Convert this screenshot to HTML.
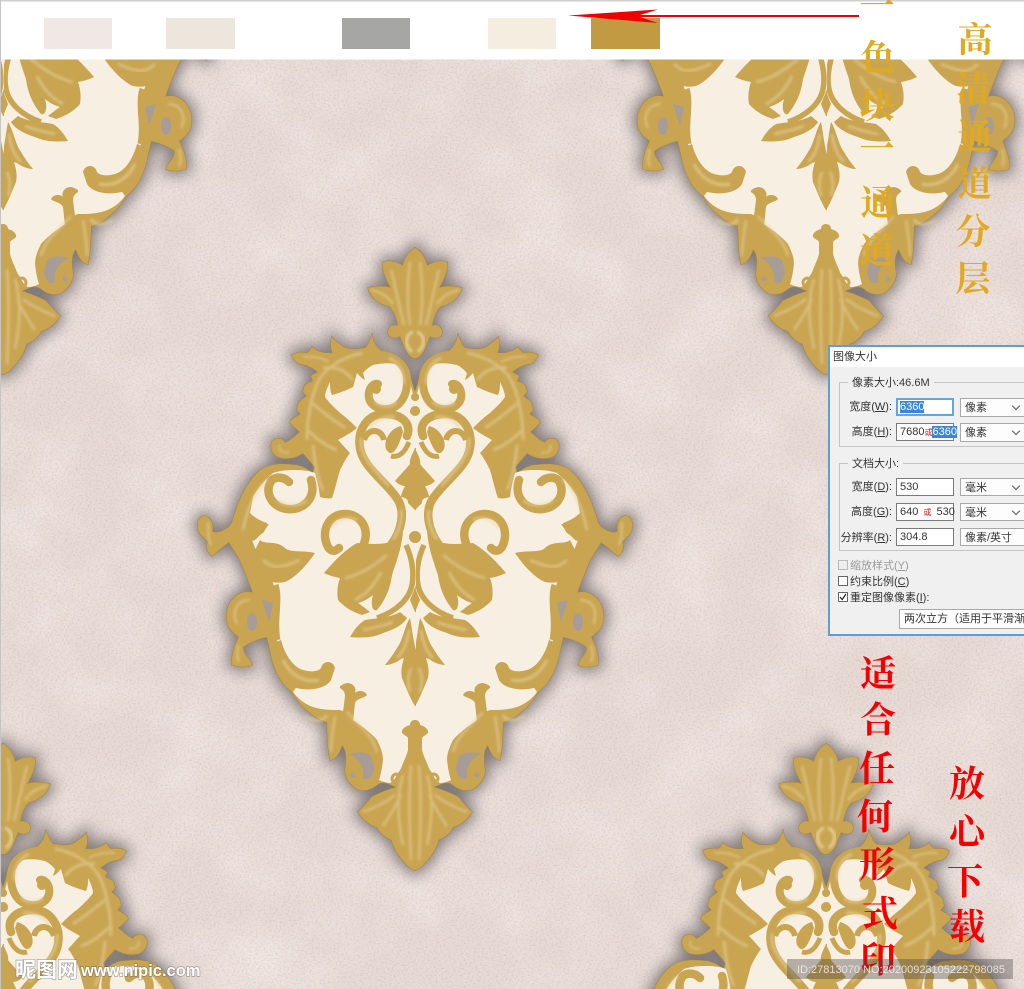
<!DOCTYPE html>
<html><head><meta charset="utf-8">
<style>
html,body{margin:0;padding:0;background:#fff;width:1024px;height:989px;overflow:hidden}
#wrap{position:relative;width:1024px;height:989px;overflow:hidden;font-family:"Liberation Sans","Noto Sans CJK SC",sans-serif}
svg.art{position:absolute;left:0;top:0}
#dlg{position:absolute;left:828px;top:345px;width:196px;height:291px;box-sizing:border-box;border:2px solid #5b9fd6;border-right:none;background:#f0f0f0;color:#333;font-size:11px;line-height:14px;overflow:hidden;filter:blur(.25px)}
#dlg .t{position:absolute;white-space:nowrap}
#dlg .title{position:absolute;left:0;top:0;right:0;height:20px;background:#fff}
#dlg .gb{position:absolute;border:1px solid #c4c4c4;box-sizing:border-box}
#dlg .i{position:absolute;background:#fff;border:1px solid #7a7a7a;box-sizing:border-box;height:18px;width:58px;left:66px;padding:1px 0 0 3px;font-size:11px;line-height:14px;white-space:nowrap}
#dlg .s{position:absolute;background:#fdfdfd;border:1px solid #a9a9a9;box-sizing:border-box;height:19px;left:130px;width:70px;padding:2px 0 0 4px;line-height:14px;white-space:nowrap;overflow:hidden}
#dlg .s:after{content:"";position:absolute;left:52px;top:4px;width:5px;height:5px;border-right:1px solid #555;border-bottom:1px solid #555;transform:rotate(45deg)}
#dlg .s.n:after{display:none}
#dlg .sel{background:#3b86d8;color:#fff}
#dlg .r{position:absolute;left:0;width:62px;text-align:right;white-space:nowrap}
#dlg .c{position:absolute;left:8px;width:10px;height:10px;border:1px solid #666;box-sizing:border-box;background:#fff}
#dlg u{text-decoration:underline}
</style></head>
<body><div id="wrap">
<svg class="art" width="1024" height="989" viewBox="0 0 1024 989" xmlns="http://www.w3.org/2000/svg">
<defs>
<filter id="t1" x="0" y="0" width="100%" height="100%" color-interpolation-filters="sRGB"><feTurbulence type="fractalNoise" baseFrequency="0.014" numOctaves="4" seed="7"/><feColorMatrix values="0 0 0 0 1  0 0 0 0 .97  0 0 0 0 .96  .8 0 0 0 -.3"/></filter>
<filter id="t2" x="0" y="0" width="100%" height="100%" color-interpolation-filters="sRGB"><feTurbulence type="fractalNoise" baseFrequency="0.5 0.6" numOctaves="2" seed="3"/><feColorMatrix values="0 0 0 0 .6  0 0 0 0 .47  0 0 0 0 .45  .45 0 0 0 -.19"/></filter>
<filter id="sh" x="-30%" y="-30%" width="160%" height="160%"><feGaussianBlur stdDeviation="7.5"/></filter>
<filter id="gl" x="-20%" y="-20%" width="140%" height="140%"><feGaussianBlur stdDeviation="1.3"/></filter>

<path id="sil" d="M0 248C4 250 10 256 12 266C18 262 26 260 32 262C33 272 28 280 24 288C30 286 40 286 47 288C44 298 34 305 26 306C21 310 18 318 17 326C22 324 27 327 27 332C27 338 20 339 15 336C12 342 8 358 0 358Z
M0 392C3 385 4 378 6 372C10 362 22 356 32 352C38 349 42 342 43 335C46 342 47 346 50 348C60 350 68 350 73 346C77 343 81 340 83 337C85 343 84 350 82 353C90 354 98 352 103 347C105 350 106 352 108 353C115 352 120 353 123 355C121 360 118 364 113 364C107 365 102 368 97 372L104 376L102 381L110 385L112 392L108 396L116 402L118 410L114 414L124 420L125 423L115 432C120 436 125 441 130 443C132 438 140 437 143 442C146 450 140 458 132 458C125 459 118 457 112 453C108 458 103 463 100 467L102 473C110 468 115 465 122 465C138 463 150 465 158 473C170 485 178 505 183 523L186 527C195 533 200 534 203 531C201 524 205 516 211 516C217 517 219 525 216 532C213 537 208 540 207 542C209 547 208 552 203 556C198 552 192 546 186 542L175 560C170 572 165 584 162 593C170 590 180 594 185 603C190 612 190 625 182 632L176 637C180 645 184 655 183 665C178 666 170 668 163 665C165 658 172 655 172 647C165 642 155 638 148 637L145 650C142 665 138 675 132 683C128 688 125 690 122 693C118 700 114 706 108 710C102 716 95 720 88 722L87 745L85 760C80 760 75 752 73 745C68 750 68 760 70 770C70 778 64 785 58 789C52 791 45 791 37 784C30 780 25 785 18 787C28 790 35 793 43 797C48 803 53 808 57 812C52 820 45 825 38 827C35 834 28 838 23 840C22 848 15 858 8 865C5 868 3 869 0 870Z"/>

<g id="half">
 <!-- grey holes -->
 <path d="M44 756C50 751 58 752 66 754C56 758 50 768 52 778C47 782 42 776 41 768Z" fill="#a69c98"/>
 <circle cx="62" cy="775" r="2.5" fill="#a69c98"/>
 <path d="M142 603L146 622L153 600Z" fill="#a69c98"/>
 <ellipse cx="163" cy="622" rx="5" ry="9" fill="#a69c98"/>
 <!-- cream -->
 <path fill="#f6efe2" d="M-1 400L0 400C3 392 5 382 6 372C12 364 25 361 42 365C48 368 51 372 52 373L50 380C54 378 56 375 58 373C60 380 61 384 62 387C70 391 76 393 83 395C85 391 85 386 85 382C88 388 90 393 90 397C85 404 80 408 75 413C68 418 63 423 58 428C64 433 70 436 77 440C73 444 69 449 65 453C69 458 72 464 75 470C78 480 80 490 83 498C88 499 92 498 95 497C96 488 98 480 100 473C108 470 115 470 122 470C130 470 136 471 142 473C150 480 157 488 162 497L165 513C160 518 154 521 148 523C149 528 150 531 152 533L163 540C160 548 157 555 155 560C150 568 146 575 142 583C140 590 138 598 138 607L138 640C135 650 132 657 128 663C122 670 116 672 108 672L122 692C116 700 110 704 102 707C92 710 84 710 75 710L70 712L62 720C52 727 44 733 38 740C34 748 32 754 32 760C33 768 34 774 36 780C32 782 28 783 25 783C21 781 19 777 17 773L8 760L-1 770Z"/>
 <!-- top ring -->
 <path d="M46 356C28 352 10 360 8 378C7 394 14 408 28 409C40 410 48 402 46 392C45 386 40 383 37 384" fill="none" stroke="#c9a552" stroke-width="8" stroke-linecap="round"/>
 <path d="M26 358C16 362 11 372 11 384M18 402C24 407 34 407 40 402" fill="none" stroke="#e8d3a0" stroke-width="3" filter="url(#gl)" opacity=".6"/>
 <circle cx="39" cy="389" r="5" fill="#c9a552"/>
 <circle cx="0" cy="397" r="4" fill="#c9a552"/>
 <circle cx="0" cy="411" r="5" fill="#c9a552"/>
 <circle cx="0" cy="537" r="6" fill="#c9a552"/>
 <!-- S heart -->
 <path d="M8 436C3 424 13 414 30 414C48 414 58 430 55 448C52 468 28 482 17 500C10 512 13 530 24 545" fill="none" stroke="#c9a552" stroke-width="8.5" stroke-linecap="round"/>
 <path d="M12 432C18 452 24 458 29 449C32 440 24 428 14 426Z" fill="#c9a552"/>
 <path d="M6 442C10 452 16 458 24 456" fill="none" stroke="#c9a552" stroke-width="5"/>
 <path d="M31 440C33 429 47 427 51 440" fill="none" stroke="#c9a552" stroke-width="6"/>
 <path d="M54 438C56 456 38 472 26 486M14 510C12 520 16 530 22 540M20 417C30 416 40 420 46 428" fill="none" stroke="#e8d3a0" stroke-width="3" filter="url(#gl)" opacity=".6"/>
 <!-- central palmette -->
 <path d="M0 448C3 455 6 460 5 464C10 470 14 474 20 481C16 485 12 486 10 486C12 490 14 494 14 497C9 498 7 499 7 503C4 506 2 508 0 510L-1 510L-1 448Z" fill="#c9a552"/>
 <!-- lower spiral + leaf mass -->
 <path d="M52 546C44 528 55 514 70 514C86 514 94 530 88 545C85 552 80 552 76 548" fill="none" stroke="#c9a552" stroke-width="8.5" stroke-linecap="round"/>
 <path d="M12 532C20 545 35 545 58 543C70 550 80 560 91 573C85 576 80 577 75 578C78 586 78 594 77 600C70 608 62 612 53 615L45 612C50 608 54 605 57 603C50 601 46 598 42 595C45 605 42 612 38 610C30 600 25 590 23 575C18 560 14 550 12 532Z" fill="#c9a552"/>
 <path d="M28 555C40 565 55 575 70 578M34 572C40 585 50 595 60 600M58 520C66 516 78 518 84 528" fill="none" stroke="#e8d3a0" stroke-width="3" filter="url(#gl)" opacity=".55"/>
 <!-- cross strands -->
 <path d="M9 545C2 560 1 575 3 585C6 600 20 612 38 618" fill="none" stroke="#c9a552" stroke-width="5.5"/>
 <path d="M-1 585L5 600L0 612L-1 612Z" fill="#c9a552"/>
 <path d="M15 612C25 618 40 618 50 620C58 625 62 632 65 637C55 638 42 638 32 633C22 630 12 625 8 618Z" fill="#c9a552"/>
 <path d="M5 618C10 625 12 640 18 648C22 655 26 660 30 665C24 665 18 662 14 659L11 658C14 668 14 672 13 678C8 690 4 700 0 706L-1 706L-1 650C2 640 3 628 5 618Z" fill="#c9a552"/>
 <path d="M6 630C8 642 10 650 18 658M4 668C7 675 8 682 5 692M22 622C32 626 42 628 52 630" fill="none" stroke="#e8d3a0" stroke-width="2.6" filter="url(#gl)" opacity=".6"/>
 <!-- bottom curl, bands -->
 <path d="M80 668C82 660 92 660 94 668C97 672 105 672 112 670C122 667 130 655 134 640L146 645C142 665 135 680 125 686C110 692 90 690 84 680Z" fill="#c9a552"/>
 <path d="M138 640C142 620 135 600 140 585" fill="none" stroke="#c9a552" stroke-width="7"/>
 <path d="M96 680C110 683 124 676 132 660M110 716C100 722 92 722 88 715" fill="none" stroke="#e8d3a0" stroke-width="3" filter="url(#gl)" opacity=".6"/>
 <!-- big side leaf -->
 <path d="M100 553C112 550 125 553 130 548C138 540 150 545 155 540L165 560C158 578 145 585 130 582C120 578 108 565 100 553Z" fill="#c9a552"/>
 <path d="M115 560C128 565 140 572 152 560" fill="none" stroke="#e8d3a0" stroke-width="2.6" filter="url(#gl)" opacity=".6"/>
 <!-- inner big scroll -->
 <path d="M104 480C98 498 112 511 128 509C142 507 150 495 145 483C142 476 132 476 126 482" fill="none" stroke="#c9a552" stroke-width="8.5" stroke-linecap="round"/>
 <path d="M148 480C160 490 168 510 172 530M108 500C115 506 128 508 138 500" fill="none" stroke="#e8d3a0" stroke-width="2.6" filter="url(#gl)" opacity=".6"/>
 <path d="M146 524C155 524 166 530 170 534C168 540 164 542 160 540C154 534 150 530 146 524Z" fill="#c9a552"/>
 <!-- side bits head -->
 <path d="M60 703C58 698 50 698 48 695C50 690 58 690 60 693C58 688 62 683 68 683C72 684 76 686 75 688C72 690 70 692 70 696L72 712L62 722Z" fill="#c9a552"/>
 <path d="M68 712C56 726 42 735 38 752M80 716C82 730 84 740 84 752" fill="none" stroke="#e8d3a0" stroke-width="2.6" filter="url(#gl)" opacity=".55"/>
 <!-- bottom stem -->
 <path d="M0 720C3 720 5 722 5 725C10 726 14 730 13 733C10 736 8 736 7 738L7 750C9 758 14 766 16 775L20 790L0 800L-1 800L-1 720Z" fill="#c9a552"/>
 <path d="M17 787C13 782 14 774 19 774C23 775 24 779 22 781" fill="none" stroke="#c9a552" stroke-width="3"/>
 <!-- veins crown top -->
 <path d="M5 262C8 285 8 305 5 325M24 270C20 285 16 305 11 325M44 290C34 292 28 296 22 304" fill="none" stroke="#e8d3a0" stroke-width="2.6" filter="url(#gl)" opacity=".55"/>
 <path d="M2 332C10 335 11 345 3 352" fill="none" stroke="#efdfb8" stroke-width="3" filter="url(#gl)" opacity=".7"/>
 <!-- veins leaf side -->
 <path d="M52 353C70 356 85 365 95 378C104 395 108 418 108 440M92 368C80 366 70 370 62 380M104 402C95 410 85 418 70 428M108 430C98 438 92 445 78 450M102 445C100 465 98 478 92 490" fill="none" stroke="#e8d3a0" stroke-width="3" filter="url(#gl)" opacity=".55"/>
 <path d="M112 357C102 356 92 358 86 362M135 445C138 450 132 454 126 452" fill="none" stroke="#e8d3a0" stroke-width="2" filter="url(#gl)" opacity=".55"/>
 <!-- veins side -->
 <path d="M165 600C178 600 184 612 178 624M176 645C178 652 178 658 176 662M207 522C206 530 208 536 204 545" fill="none" stroke="#e8d3a0" stroke-width="2.4" filter="url(#gl)" opacity=".55"/>
 <!-- crown bottom -->
 <path d="M4 765C6 790 6 820 4 860M12 775C18 795 18 815 12 845M20 795C30 803 42 808 52 812M14 795C22 812 28 820 32 826" fill="none" stroke="#e8d3a0" stroke-width="2.6" filter="url(#gl)" opacity=".55"/>
</g>

<g id="motif">
 <g filter="url(#sh)" fill="#76706f" stroke="#76706f" stroke-width="9" opacity=".9"><use href="#sil"/><use href="#sil" transform="scale(-1 1)"/></g>
 <g fill="#a08750" stroke="#a08750" stroke-width="1.4"><use href="#sil"/><use href="#sil" transform="scale(-1 1)"/></g>
 <g fill="#c9a552" stroke="#c9a552" stroke-width=".3"><use href="#sil"/><use href="#sil" transform="scale(-1 1)"/></g>
 <use href="#half"/>
 <use href="#half" transform="scale(-1 1)"/>
</g>
</defs>

<rect width="1024" height="989" fill="#e8dbd6"/>
<rect width="1024" height="989" filter="url(#t1)"/>
<rect width="1024" height="989" filter="url(#t2)"/>

<use href="#motif" x="415"/>
<use href="#motif" x="826" y="-496"/>
<use href="#motif" x="3" y="-496"/>
<use href="#motif" x="826" y="496"/>
<use href="#motif" x="3" y="496"/>

<!-- top strip -->
<rect width="1024" height="59.5" fill="#fff"/>
<rect width="1024" height="1.5" fill="#cfcfcf"/>
<rect width="1" height="989" fill="#c8c4c2"/>
<rect x="44" y="18" width="68" height="31" fill="#f1e8e6"/>
<rect x="166" y="18" width="69" height="31" fill="#ece6dc"/>
<rect x="342" y="18" width="68" height="31" fill="#a6a6a4"/>
<rect x="488" y="18" width="68" height="31" fill="#f5eee0"/>
<rect x="591" y="18" width="69" height="31" fill="#c29a42"/>
<path d="M568 15.5L658 9.5L640 15L859 15V17L640 17L658 23Z" fill="#f00000"/>
<g font-family="'Liberation Sans','Noto Sans CJK SC',sans-serif" fill="#fff" stroke="#5e5957" stroke-opacity=".5" stroke-width="1.4" paint-order="stroke" font-weight="700">
 <text x="15" y="977" font-size="21" font-family="'Noto Sans CJK SC',sans-serif">昵图网</text>
 <text x="81" y="976" font-size="16.5">www.nipic.com</text>
</g>
<!-- gold vertical text -->
<g font-family="'Noto Serif CJK SC',serif" font-weight="700" font-size="35" fill="#e0a922" text-anchor="middle">
 <text x="877" y="18">一</text><text x="878" y="70">色</text><text x="877" y="118">块</text><text x="877" y="161">一</text><text x="878" y="215">通</text><text x="877" y="263">道</text>
 <text x="975" y="52">高</text><text x="973" y="101">清</text><text x="975" y="149">通</text><text x="975" y="196">道</text><text x="973" y="244">分</text><text x="973" y="291">层</text>
</g>
<!-- red vertical text -->
<g font-family="'Noto Serif CJK SC',serif" font-weight="700" font-size="36" fill="#f30000" text-anchor="middle">
 <text x="878" y="686">适</text><text x="878" y="732">合</text><text x="877" y="781">任</text><text x="875" y="829">何</text><text x="877" y="877">形</text><text x="880" y="926">式</text><text x="878" y="972">印</text>
 <text x="967" y="796">放</text><text x="967" y="844">心</text><text x="965" y="894">下</text><text x="967" y="939">载</text>
</g>
<!-- watermark strip -->
<rect x="787" y="959" width="226" height="20" fill="#4a4444" fill-opacity=".38"/>
<text x="797" y="973" font-family="'Liberation Sans',sans-serif" font-size="11" fill="#f4eeee" fill-opacity=".85">ID:27813070 NO:20200923105222798085</text>
</svg>

<div id="dlg">
 <div class="title"></div>
 <div class="t" style="left:3px;top:3px;font-size:11px">图像大小</div>
 <div class="gb" style="left:9px;top:35px;width:200px;height:65px"></div>
 <div class="t" style="left:18px;top:29px;background:#f0f0f0;padding:0 4px">像素大小:46.6M</div>
 <div class="r" style="top:53px">宽度(<u>W</u>):</div>
 <div class="i" style="top:51px;border:2px solid #62a6de;padding:0 0 0 2px"><span class="sel">6360</span></div>
 <div class="s" style="top:51px">像素</div>
 <div class="r" style="top:78px">高度(<u>H</u>):</div>
 <div class="i" style="top:76px;width:58px">7680<span style="color:#e01010;font-size:8px">或</span><span class="sel">6360</span></div>
 <div class="s" style="top:76px">像素</div>

 <div class="gb" style="left:9px;top:116px;width:200px;height:88px"></div>
 <div class="t" style="left:18px;top:110px;background:#f0f0f0;padding:0 4px">文档大小:</div>
 <div class="r" style="top:133px">宽度(<u>D</u>):</div>
 <div class="i" style="top:131px">530</div>
 <div class="s" style="top:131px;height:18px">毫米</div>
 <div class="r" style="top:158px">高度(<u>G</u>):</div>
 <div class="i" style="top:156px">640 <span style="color:#e01010;font-size:8px;margin:0 2px">或</span> 530</div>
 <div class="s" style="top:156px;height:18px">毫米</div>
 <div class="r" style="top:184px">分辨率(<u>R</u>):</div>
 <div class="i" style="top:181px">304.8</div>
 <div class="s n" style="top:181px;height:18px">像素/英寸</div>

 <div class="c" style="top:213px;border-color:#bbb;background:#eee"></div>
 <div class="t" style="left:20px;top:212px;color:#9a9a9a">缩放样式(<u>Y</u>)</div>
 <div class="c" style="top:229px"></div>
 <div class="t" style="left:20px;top:228px">约束比例(<u>C</u>)</div>
 <div class="c" style="top:245px"></div>
 <svg style="position:absolute;left:8px;top:245px" width="10" height="10" viewBox="0 0 10 10"><path d="M2 5L4.2 7.5L8 2" fill="none" stroke="#222" stroke-width="1.2"/></svg>
 <div class="t" style="left:20px;top:244px">重定图像像素(<u>I</u>):</div>
 <div class="s n" style="left:69px;top:262px;width:140px;height:20px">两次立方（适用于平滑渐变</div>
</div>
</div></body></html>
